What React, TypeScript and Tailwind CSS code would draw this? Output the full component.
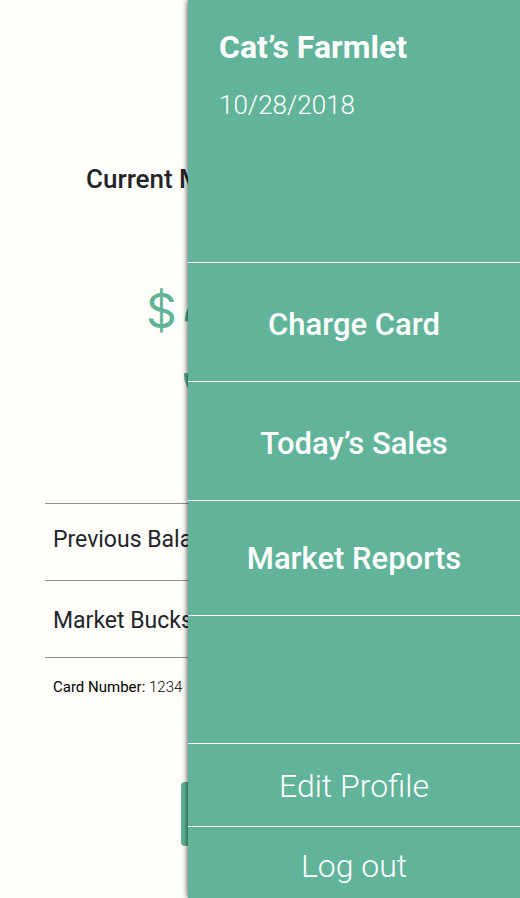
import React from "react";

const mainLinks = [
  { label: "Charge Card", row: "h-[119px] pt-1.5" },
  { label: "Today’s Sales", row: "h-[119px] pt-1.5" },
  { label: "Market Reports", row: "h-[115px] pt-0.5" },
];

function BalancePage() {
  return (
    <main className="flex min-h-screen flex-col overflow-hidden pt-[160px] text-[#212529]">
      <h1 className="whitespace-nowrap pl-[86px] text-[26px] leading-[38px] font-medium">
        Current Market
      </h1>
      <p className="mt-[80px] flex h-[152px] items-start pl-[146px] text-[#61b499]">
        <span className="font-['Inter',sans-serif] text-[48px] leading-[66px]">$</span>
        <span className="text-[152px] leading-[144px]">3</span>
      </p>
      <dl className="mx-[45px] mt-[73px] border-t border-[#8f9093] text-[23px] whitespace-nowrap">
        <div className="flex h-[77px] items-center border-b border-[#8f9093] px-2 pb-1">
          <dt>Previous Balance</dt>
        </div>
        <div className="flex h-[77px] items-center border-b border-[#8f9093] px-2 pt-1">
          <dt>Market Bucks</dt>
        </div>
      </dl>
      <p className="mt-[17px] pl-[53px] text-[15px] leading-6 whitespace-nowrap text-black">
        Card Number: <span className="font-light">1234</span>
      </p>
      <button
        type="button"
        aria-label="Done"
        className="mx-auto mt-[83px] h-16 w-[158px] rounded-[4px] bg-[#61b499]"
      />
    </main>
  );
}

function Drawer() {
  return (
    <aside className="absolute inset-y-0 right-0 flex w-[332px] flex-col bg-[#61b499] text-white shadow-[0_0_6px_rgba(0,0,0,0.8)]">
      <header className="flex h-[262px] flex-col gap-4 px-[31px] pt-7">
        <h2 className="text-[32px] leading-[38px] font-bold">Cat’s Farmlet</h2>
        <time dateTime="2018-10-28" className="text-[26px] leading-[46px] font-light">
          10/28/2018
        </time>
      </header>
      <nav aria-label="Market" className="border-b border-white">
        {mainLinks.map(({ label, row }) => (
          <a
            key={label}
            href="#"
            className={`flex items-center justify-center border-t border-white text-[31px] font-medium ${row}`}
          >
            {label}
          </a>
        ))}
      </nav>
      <nav aria-label="Account" className="mt-auto text-[32px] font-light">
        <a href="#" className="flex h-[83px] items-center justify-center border-t border-white pt-0.5">
          Edit Profile
        </a>
        <a href="#" className="flex h-[72px] items-center justify-center border-t border-white pt-1.5">
          Log out
        </a>
      </nav>
    </aside>
  );
}

export default function App() {
  return (
    <div className="relative min-h-screen overflow-hidden bg-[#fffefa] font-['Roboto','Liberation_Sans',sans-serif]">
      <BalancePage />
      <Drawer />
    </div>
  );
}
